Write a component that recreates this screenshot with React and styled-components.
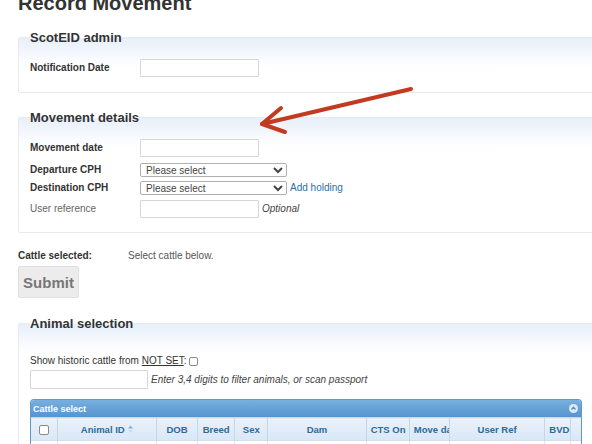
import React from 'react';
import styled, { createGlobalStyle } from 'styled-components';

const GlobalStyle = createGlobalStyle`
  html, body {
    margin: 0;
    padding: 0;
    background: #fff;
    overflow: hidden;
  }
  body {
    font-family: "Liberation Sans", Arial, sans-serif;
    color: #333;
  }
`

const Page = styled.div`
  position: relative;
  width: 640px;
  padding-left: 18px;
`

const Title = styled.h1`
  margin: -8px 0 0;
  font-size: 20px;
  line-height: 23px;
  font-weight: bold;
  color: #333;
`

const Fieldset = styled.fieldset`
  margin: ${p => p.$top}px 0 0;
  padding: 0 11px ${p => p.$bottom}px;
  border: 1px solid #e8eaed;
  border-radius: 2px;
  background: linear-gradient(#e7effa 0, #f7f9fd 18px, #fff 30px);
  min-width: 0;
`

const Legend = styled.legend`
  padding: 0;
  font-size: 13px;
  line-height: 15px;
  font-weight: bold;
  color: #333;
`

const Row = styled.div`
  display: flex;
  align-items: center;
  margin-top: ${p => p.$gap}px;
  font-size: 10px;
  line-height: 14px;
`

const Label = styled.span`
  width: ${p => p.$width || 110}px;
  flex: none;
  font-weight: ${p => (p.$plain ? 'normal' : 'bold')};
  color: ${p => (p.$plain ? '#666' : '#333')};
`

const TextInput = styled.input`
  box-sizing: border-box;
  width: ${p => p.$width || 119}px;
  height: ${p => p.$height || 18}px;
  margin: 0;
  padding: 0 3px;
  border: 1px solid #d6d6d6;
  border-radius: 1px;
  background: #fff;
  font: 10px "Liberation Sans", Arial, sans-serif;
`

const Select = styled.select`
  box-sizing: border-box;
  width: 147px;
  height: 14px;
  margin: 0;
  padding: 0 1px;
  border: 1px solid #b0b0b0;
  border-radius: 2px;
  background: #fff;
  color: #444;
  font: 10px/12px "Liberation Sans", Arial, sans-serif;
`

const Link = styled.a`
  margin-left: 3px;
  color: #2b6fa6;
  text-decoration: none;
`

const Hint = styled.span`
  margin-left: 3px;
  font-style: italic;
  color: #444;
`

const Plain = styled.span`
  color: #555;
`

const Underlined = styled.span`
  text-decoration: underline;
`

const SmallBox = styled.input`
  appearance: none;
  box-sizing: border-box;
  width: ${p => p.$size || 9}px;
  height: ${p => p.$size || 9}px;
  margin: 0 0 0 ${p => p.$left || 0}px;
  border: 1px solid #8a8a8a;
  border-radius: 2px;
  background: #fff;
  vertical-align: middle;
`

const SubmitButton = styled.button`
  display: block;
  box-sizing: border-box;
  width: 61px;
  height: 32px;
  margin-top: 3px;
  padding: 0;
  border: 1px solid #e0e0e0;
  border-radius: 2px;
  background: #ececec;
  color: #777;
  font: bold 15px "Liberation Sans", Arial, sans-serif;
`

const Grid = styled.div`
  width: 550px;
  margin-top: 10px;
  border: 1px solid #5f98cc;
  border-bottom: none;
  border-radius: 4px 4px 0 0;
  overflow: hidden;
`

const GridBar = styled.div`
  display: flex;
  align-items: center;
  justify-content: space-between;
  height: 17px;
  padding: 0 3px 0 2px;
  background: linear-gradient(#78afdf, #5595cf);
  color: #fff;
  font-size: 9px;
  font-weight: bold;
`

const Table = styled.table`
  width: 100%;
  table-layout: fixed;
  border-collapse: collapse;
`

const Th = styled.th`
  height: 22px;
  padding: 0 4px;
  border-left: 1px solid #c5d8eb;
  border-top: 1px solid #c5d8eb;
  background: linear-gradient(#eaf2fa, #d9e7f5);
  color: #2c6a9c;
  font-size: 9.5px;
  font-weight: bold;
  text-align: center;
  white-space: nowrap;
  overflow: hidden;
  &:first-child { border-left: none; }
`

const Td = styled.td`
  height: 14px;
  border-left: 1px solid #e3e3e3;
  border-top: 1px solid #d0dfee;
  background: #fff;
  &:first-child { border-left: none; }
`

const Arrow = styled.svg`
  position: absolute;
  left: 0;
  top: 0;
  pointer-events: none;
`

const SortIcon = () => (
  <svg width="5" height="8" viewBox="0 0 5 8" style={{ marginLeft: 3 }}>
    <path d="M0 3.5 L2.5 0.5 L5 3.5 Z" fill="#7fb0dc" />
    <path d="M0 5 L2.5 8 L5 5 Z" fill="#c8dcef" />
  </svg>
)

const CollapseIcon = () => (
  <svg width="9" height="9" viewBox="0 0 9 9">
    <circle cx="4.5" cy="4.5" r="4.5" fill="#dde9f5" />
    <path d="M2.5 5.5 L4.5 3.3 L6.5 5.5" fill="none" stroke="#5a8fc2" strokeWidth="1.3" />
  </svg>
)

const columns = [
  { width: 26 },
  { width: 99, name: 'Animal ID', sort: true },
  { width: 41, name: 'DOB' },
  { width: 37, name: 'Breed' },
  { width: 33, name: 'Sex' },
  { width: 98, name: 'Dam' },
  { width: 43, name: 'CTS On' },
  { width: 40, name: 'Move date' },
  { width: 95, name: 'User Ref' },
  { width: 26, name: 'BVD' },
  { width: 10 },
]

const App = () => {
  return (
    <Page>
      <GlobalStyle />
      <Title>Record Movement</Title>

      <Fieldset $top={15} $bottom={15}>
        <Legend>ScotEID admin</Legend>
        <Row $gap={14}>
          <Label>Notification Date</Label>
          <TextInput />
        </Row>
      </Fieldset>

      <Fieldset $top={17} $bottom={14}>
        <Legend>Movement details</Legend>
        <Row $gap={14}>
          <Label>Movement date</Label>
          <TextInput />
        </Row>
        <Row $gap={6}>
          <Label>Departure CPH</Label>
          <Select defaultValue="">
            <option value="">Please select</option>
          </Select>
        </Row>
        <Row $gap={4}>
          <Label>Destination CPH</Label>
          <Select defaultValue="">
            <option value="">Please select</option>
          </Select>
          <Link href="#">Add holding</Link>
        </Row>
        <Row $gap={5}>
          <Label $plain>User reference</Label>
          <TextInput />
          <Hint>Optional</Hint>
        </Row>
      </Fieldset>

      <Row $gap={16}>
        <Label $width={110}>Cattle selected:</Label>
        <Plain>Select cattle below.</Plain>
      </Row>
      <SubmitButton>Submit</SubmitButton>

      <Fieldset $top={18} $bottom={0}>
        <Legend>Animal selection</Legend>
        <Row $gap={23}>
          <span>
            Show historic cattle from <Underlined>NOT SET</Underlined>:
          </span>
          <SmallBox type="checkbox" $left={2} />
        </Row>
        <Row $gap={2}>
          <TextInput $width={118} $height={19} />
          <Hint>Enter 3,4 digits to filter animals, or scan passport</Hint>
        </Row>
        <Grid>
          <GridBar>
            <span>Cattle select</span>
            <CollapseIcon />
          </GridBar>
          <Table>
            <colgroup>
              {columns.map((c, i) => (
                <col key={i} style={{ width: c.width }} />
              ))}
            </colgroup>
            <thead>
              <tr>
                {columns.map((c, i) => (
                  <Th key={i}>
                    {i === 0 ? <SmallBox type="checkbox" $size={10} /> : c.name}
                    {c.sort && <SortIcon />}
                  </Th>
                ))}
              </tr>
            </thead>
            <tbody>
              <tr>
                {columns.map((c, i) => (
                  <Td key={i} />
                ))}
              </tr>
            </tbody>
          </Table>
        </Grid>
      </Fieldset>

      <Arrow width="592" height="444" viewBox="0 0 592 444">
        <g stroke="#c23a1f" strokeWidth="4" strokeLinecap="round" strokeLinejoin="round" fill="none">
          <path d="M411 97 L262 132" />
          <path d="M281 116 L262 132 L285 140" />
        </g>
      </Arrow>
    </Page>
  )
}

export default App
